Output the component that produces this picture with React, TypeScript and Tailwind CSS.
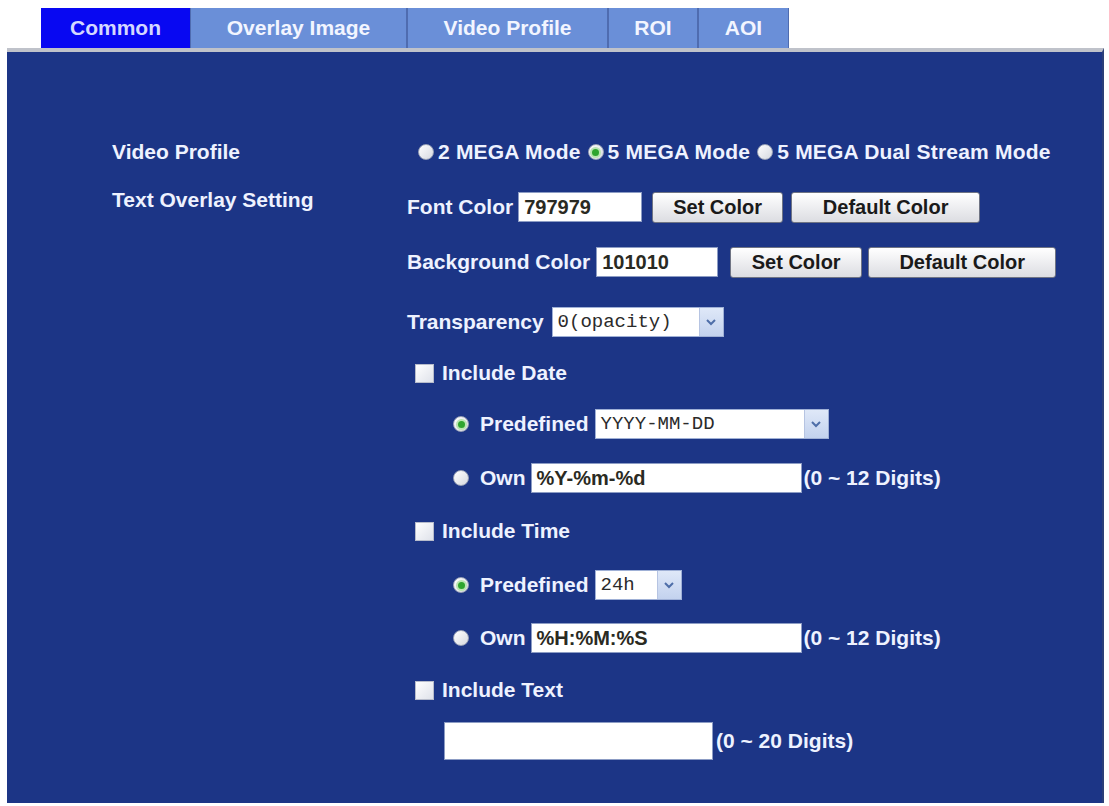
import React from "react";

const font = "font-['Liberation_Sans',Arial,sans-serif]";

function Radio({ checked }: { checked?: boolean }) {
  return (
    <span className="inline-flex w-[16px] h-[16px] rounded-full bg-gradient-to-br from-white to-[#d6d9e0] border border-[#9aa3b8] items-center justify-center shrink-0">
      {checked && <span className="w-[7px] h-[7px] rounded-full bg-[#2fa52f] ring-2 ring-[#b9e6b0]" />}
    </span>
  );
}

function Check() {
  return <span className="inline-block w-[19px] h-[19px] bg-gradient-to-br from-white to-[#dfe2ea] border border-[#b7bccb] shrink-0" />;
}

function TextBox({ value, w }: { value: string; w: string }) {
  return (
    <span className={`inline-flex items-center h-[30px] bg-white border border-[#8c9cc4] pl-[5px] text-[#2a2a22] text-[20px] font-bold ${w}`}>
      {value}
    </span>
  );
}

function Btn({ label, w }: { label: string; w: string }) {
  return (
    <span className={`inline-flex items-center justify-center h-[31px] rounded-[3px] border border-[#6f7484] bg-gradient-to-b from-white to-[#dcdde2] text-[#1a1a1a] text-[20px] font-bold ${w}`}>
      {label}
    </span>
  );
}

function Select({ value, w }: { value: string; w: string }) {
  return (
    <span className={`inline-flex items-center h-[30px] bg-white border border-[#9fb0d6] ${w}`}>
      <span className="flex-1 pl-[5px] font-['Liberation_Mono',monospace] font-normal text-[19px] text-[#2b2b2b] whitespace-nowrap">{value}</span>
      <span className="w-[24px] h-full bg-gradient-to-b from-[#dfe8f8] to-[#c3d2ee] border-l border-[#b6c4e2] flex items-center justify-center">
        <svg width="12" height="9" viewBox="0 0 12 9"><path d="M2 2l4 4 4-4" stroke="#4e6ea8" strokeWidth="2" fill="none" /></svg>
      </span>
    </span>
  );
}

export default function App() {
  const tabs = [
    { t: "Common", w: "w-[149px]", active: true },
    { t: "Overlay Image", w: "w-[217px]" },
    { t: "Video Profile", w: "w-[201px]" },
    { t: "ROI", w: "w-[90px]" },
    { t: "AOI", w: "w-[91px]" },
  ];
  return (
    <div className={`w-[1109px] h-[806px] bg-white overflow-hidden ${font}`}>
      <div className="flex pl-[41px] pt-[8px] h-[48px]">
        {tabs.map((t) =>
          t.active ? (
            <div key={t.t} className={`${t.w} h-[40px] bg-[#0808f2] flex items-center justify-center text-[21px] font-bold text-[#d4d8ff]`}>{t.t}</div>
          ) : (
            <div key={t.t} className={`${t.w} h-[40px] bg-[#6a8fd8] border-l border-r border-[#4f6cb0] flex items-center justify-center text-[21px] font-bold text-[#f2f5ff]`}>{t.t}</div>
          )
        )}
      </div>
      <div className="ml-[7px] w-[1097px] h-[755px] border-t-4 border-[#bfc2ca] border-r-2 border-r-[#2b3f78] bg-[#1c3586] text-[21px] font-bold text-[#eef2ff]">
        <div className="grid grid-cols-[295px_1fr] pl-[105px] pt-[85px]">
          <div className="h-[30px] flex items-center">Video Profile</div>
          <div className="h-[30px] flex items-center gap-[4px] pl-[11px] tracking-[0.2px]">
            <Radio /><span className="mr-[3px]">2 MEGA Mode</span>
            <Radio checked /><span className="mr-[3px]">5 MEGA Mode</span>
            <Radio /><span>5 MEGA Dual Stream Mode</span>
          </div>
          <div className="pt-[23px] leading-[20px]">Text Overlay Setting</div>
          <div className="flex flex-col">
            <div className="h-[30px] mt-[25px] flex items-center">
              <span className="mr-[5px]">Font Color</span>
              <TextBox value="797979" w="w-[124px]" />
              <span className="ml-[10px]"><Btn label="Set Color" w="w-[131px]" /></span>
              <span className="ml-[8px]"><Btn label="Default Color" w="w-[189px]" /></span>
            </div>
            <div className="h-[30px] mt-[25px] flex items-center">
              <span className="mr-[6px]">Background Color</span>
              <TextBox value="101010" w="w-[122px]" />
              <span className="ml-[12px]"><Btn label="Set Color" w="w-[132px]" /></span>
              <span className="ml-[6px]"><Btn label="Default Color" w="w-[188px]" /></span>
            </div>
            <div className="h-[30px] mt-[30px] flex items-center">
              <span className="mr-[8px]">Transparency</span>
              <Select value="0(opacity)" w="w-[172px]" />
            </div>
            <div className="h-[30px] mt-[21px] flex items-center pl-[8px] gap-[8px]">
              <Check /><span>Include Date</span>
            </div>
            <div className="h-[30px] mt-[21px] flex items-center pl-[46px]">
              <Radio checked /><span className="ml-[11px] mr-[6px]">Predefined</span>
              <Select value="YYYY-MM-DD" w="w-[234px]" />
            </div>
            <div className="h-[30px] mt-[24px] flex items-center pl-[46px]">
              <Radio /><span className="ml-[11px] mr-[5px]">Own</span>
              <TextBox value="%Y-%m-%d" w="w-[271px]" />
              <span className="ml-[2px]">(0 ~ 12 Digits)</span>
            </div>
            <div className="h-[30px] mt-[23px] flex items-center pl-[8px] gap-[8px]">
              <Check /><span>Include Time</span>
            </div>
            <div className="h-[30px] mt-[24px] flex items-center pl-[46px]">
              <Radio checked /><span className="ml-[11px] mr-[6px]">Predefined</span>
              <Select value="24h" w="w-[87px]" />
            </div>
            <div className="h-[30px] mt-[23px] flex items-center pl-[46px]">
              <Radio /><span className="ml-[11px] mr-[5px]">Own</span>
              <TextBox value="%H:%M:%S" w="w-[271px]" />
              <span className="ml-[2px]">(0 ~ 12 Digits)</span>
            </div>
            <div className="h-[30px] mt-[22px] flex items-center pl-[8px] gap-[8px]">
              <Check /><span>Include Text</span>
            </div>
            <div className="h-[38px] mt-[17px] flex items-center pl-[37px]">
              <span className="w-[269px] h-[38px] bg-white border border-[#8c9cc4]" />
              <span className="ml-[3px]">(0 ~ 20 Digits)</span>
            </div>
          </div>
        </div>
      </div>
    </div>
  );
}
